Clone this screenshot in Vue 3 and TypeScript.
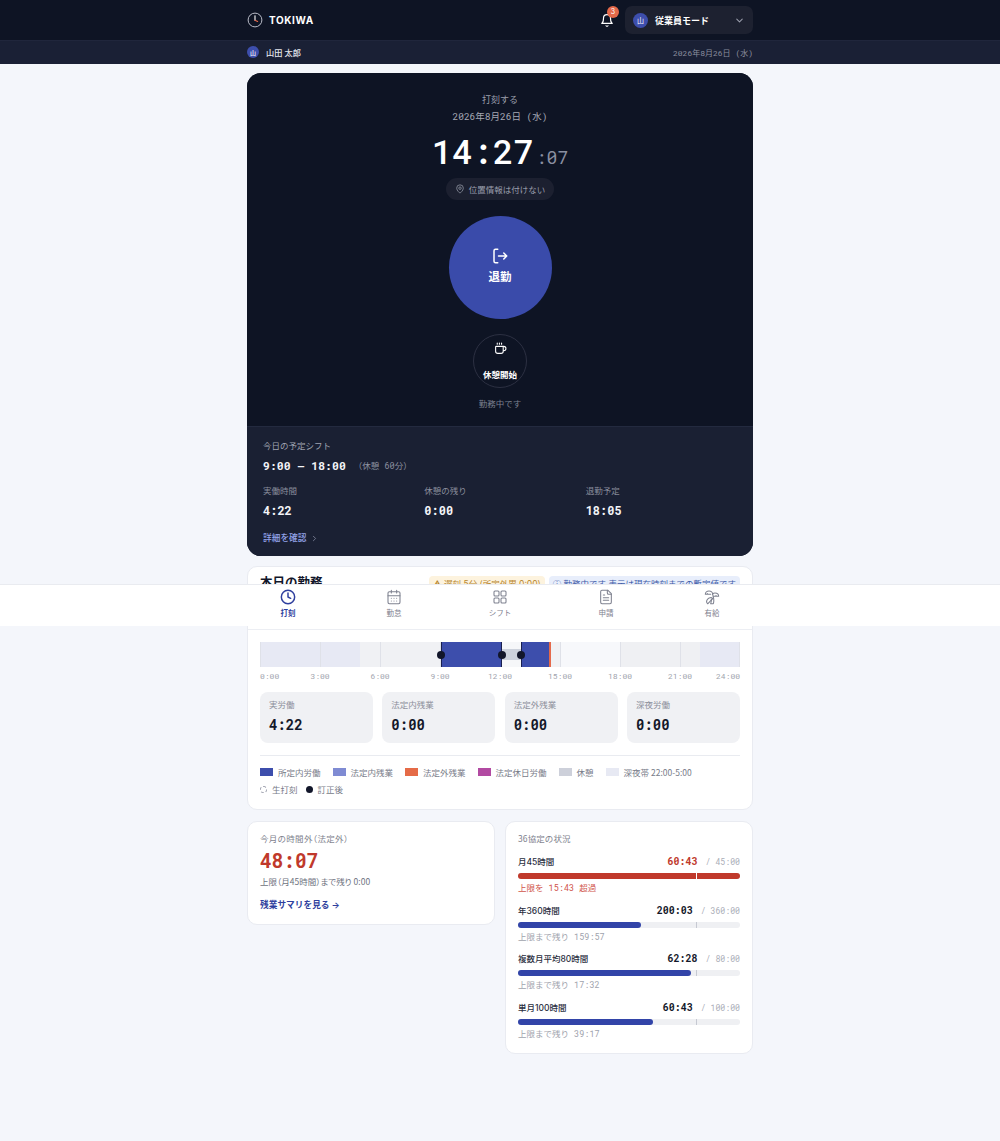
<script setup lang="ts">
const stats = [
  { label: '実労働', value: '4:22' },
  { label: '法定内残業', value: '0:00' },
  { label: '法定外残業', value: '0:00' },
  { label: '深夜労働', value: '0:00' },
]
const axis = [
  { t: '0:00', x: 0, a: 'start' }, { t: '3:00', x: 12.5, a: 'mid' }, { t: '6:00', x: 25, a: 'mid' },
  { t: '9:00', x: 37.5, a: 'mid' }, { t: '12:00', x: 50, a: 'mid' }, { t: '15:00', x: 62.5, a: 'mid' },
  { t: '18:00', x: 75, a: 'mid' }, { t: '21:00', x: 87.5, a: 'mid' }, { t: '24:00', x: 100, a: 'end' },
]
const gridlines = [0, 12.5, 25, 37.5, 50, 62.5, 75, 87.5, 99.8]
const bands = [
  { l: 0, w: 20.83, c: '#e7e9f4' }, { l: 20.83, w: 41.67, c: '#f0f1f4' }, { l: 62.5, w: 12.5, c: '#f7f8fb' },
  { l: 75, w: 16.67, c: '#eff0f3' }, { l: 91.67, w: 8.33, c: '#e7e9f4' },
]
const legend = [
  { c: '#3d4eac', t: '所定内労働' }, { c: '#7f8bd3', t: '法定内残業' }, { c: '#e56b47', t: '法定外残業' },
  { c: '#b24aa2', t: '法定休日労働' }, { c: '#cdd0da', t: '休憩' }, { c: '#e7e9f3', t: '深夜帯 22:00-5:00' },
]
const agreements = [
  { name: '月45時間', used: '60:43', max: '45:00', pct: 100, note: '上限を 15:43 超過', over: true, tick: 80 },
  { name: '年360時間', used: '200:03', max: '360:00', pct: 55.6, note: '上限まで残り 159:57', over: false, tick: 80 },
  { name: '複数月平均80時間', used: '62:28', max: '80:00', pct: 78.1, note: '上限まで残り 17:32', over: false, tick: 80 },
  { name: '単月100時間', used: '60:43', max: '100:00', pct: 60.7, note: '上限まで残り 39:17', over: false, tick: 80 },
]
</script>

<template>
  <div class="page">
    <header class="top">
      <div class="wrap top-in">
        <div class="brand">
          <svg width="16" height="16" viewBox="0 0 16 16" fill="none"><circle cx="8" cy="8" r="6.9" stroke="#b9bcc8" stroke-width="1"/><path d="M8 3.8v4.4" stroke="#fff" stroke-width="1.1" stroke-linecap="round"/><path d="M8 8.2l2.6 1.2" stroke="#e5694a" stroke-width="1.1" stroke-linecap="round"/></svg>
          <span>TOKIWA</span>
        </div>
        <div class="top-right">
          <div class="bell">
            <svg width="14" height="15" viewBox="0 0 24 24" fill="none" stroke="#fff" stroke-width="2" stroke-linecap="round" stroke-linejoin="round"><path d="M18 8a6 6 0 0 0-12 0c0 7-3 9-3 9h18s-3-2-3-9"/><path d="M13.7 21a2 2 0 0 1-3.4 0"/></svg>
            <span class="badge">3</span>
          </div>
          <div class="mode">
            <span class="ava big">山</span>
            <span class="mode-t">従業員モード</span>
            <svg class="chev" width="11" height="11" viewBox="0 0 24 24" fill="none" stroke="#9a9eac" stroke-width="2.2" stroke-linecap="round" stroke-linejoin="round"><path d="M6 9l6 6 6-6"/></svg>
          </div>
        </div>
      </div>
    </header>
    <div class="sub">
      <div class="wrap sub-in">
        <div class="who"><span class="ava">山</span><span>山田 太郎</span></div>
        <span class="sub-date">2026年8月26日 (水)</span>
      </div>
    </div>

    <main class="wrap main">
      <section class="punch">
        <div class="punch-top">
          <div class="p-label">打刻する</div>
          <div class="p-date">2026年8月26日 (水)</div>
          <div class="clock"><span class="hm">14:27</span><span class="sec">:07</span></div>
          <div class="geo">
            <svg width="10" height="10" viewBox="0 0 24 24" fill="none" stroke="#8c909e" stroke-width="2"><path d="M20 10c0 6-8 12-8 12s-8-6-8-12a8 8 0 0 1 16 0z"/><circle cx="12" cy="10" r="3"/></svg>
            <span>位置情報は付けない</span>
          </div>
          <button class="out">
            <svg width="18" height="18" viewBox="0 0 24 24" fill="none" stroke="#fff" stroke-width="2" stroke-linecap="round" stroke-linejoin="round"><path d="M9 3H6a2 2 0 0 0-2 2v14a2 2 0 0 0 2 2h3"/><path d="M10 12h11M17 8l4 4-4 4"/></svg>
            <span>退勤</span>
          </button>
          <button class="brk">
            <svg width="13" height="13" viewBox="0 0 24 24" fill="none" stroke="#fff" stroke-width="2" stroke-linecap="round" stroke-linejoin="round"><path d="M10 2v2M14 2v2M6 2v2"/><path d="M16 8a1 1 0 0 1 1 1v8a4 4 0 0 1-4 4H7a4 4 0 0 1-4-4V9a1 1 0 0 1 1-1h14a4 4 0 1 1 0 8h-1"/></svg>
            <span>休憩開始</span>
          </button>
          <div class="state">勤務中です</div>
        </div>
        <div class="punch-bot">
          <div class="sh-l">今日の予定シフト</div>
          <div class="sh-v"><span class="mono-b">9:00 – 18:00</span><span class="sh-n">（休憩 60分）</span></div>
          <div class="tri">
            <div><div class="tri-l">実働時間</div><div class="tri-v">4:22</div></div>
            <div><div class="tri-l">休憩の残り</div><div class="tri-v">0:00</div></div>
            <div><div class="tri-l">退勤予定</div><div class="tri-v">18:05</div></div>
          </div>
          <div class="more">詳細を確認<svg width="9" height="9" viewBox="0 0 24 24" fill="none" stroke="#8a8fa5" stroke-width="2" stroke-linecap="round" stroke-linejoin="round"><path d="M9 6l6 6-6 6"/></svg></div>
        </div>
      </section>

      <section class="card today">
        <div class="today-h">
          <h2>本日の勤務</h2>
          <div class="flags">
            <span class="flag warn">⚠ 遅刻 5分 (所定外累 0:00)</span>
            <span class="flag info">ⓘ 勤務中です 表示は現在時刻までの暫定値です</span>
          </div>
        </div>
        <div class="tl">
          <span v-for="b in bands" :key="b.l" class="band" :style="{ left: b.l + '%', width: b.w + '%', background: b.c }"></span>
          <span v-for="g in gridlines" :key="g" class="gl" :style="{ left: g + '%' }"></span>
          <span class="seg work" style="left:37.75%;width:12.65%"></span>
          <span class="seg gapbg" style="left:50.4%;width:4.05%"></span>
          <span class="seg rest" style="left:50.4%;width:4.05%"></span>
          <span class="seg work" style="left:54.45%;width:5.9%"></span>
          <span class="seg lateline" style="left:60.3%"></span>
          <span class="dot" style="left:37.75%"></span>
          <span class="dot" style="left:50.4%"></span>
          <span class="dot" style="left:54.45%"></span>
        </div>
        <div class="axis">
          <span v-for="a in axis" :key="a.t" :class="['ax', a.a]" :style="{ left: a.x + '%' }">{{ a.t }}</span>
        </div>
        <div class="stats">
          <div v-for="s in stats" :key="s.label" class="stat">
            <div class="stat-l">{{ s.label }}</div>
            <div class="stat-v">{{ s.value }}</div>
          </div>
        </div>
        <div class="legend">
          <div class="leg-row">
            <span v-for="l in legend" :key="l.t" class="leg"><i :style="{ background: l.c }"></i>{{ l.t }}</span>
          </div>
          <div class="leg-row two">
            <span class="leg s"><b class="raw"></b>生打刻</span>
            <span class="leg s"><b class="fix"></b>訂正後</span>
          </div>
        </div>
      </section>

      <div class="pair">
        <section class="card ot">
          <div class="c-t">今月の時間外（法定外）</div>
          <div class="ot-v">48:07</div>
          <div class="ot-n">上限（月45時間）まで残り 0:00</div>
          <div class="ot-l">残業サマリを見る →</div>
        </section>
        <section class="card agr">
          <div class="c-t">36協定の状況</div>
          <div v-for="a in agreements" :key="a.name" class="ag">
            <div class="ag-h">
              <span class="ag-n">{{ a.name }}</span>
              <span class="ag-r"><span :class="['ag-u', { red: a.over }]">{{ a.used }}</span><span class="ag-m">/ {{ a.max }}</span></span>
            </div>
            <div class="track">
              <div :class="['fill', { over: a.over }]" :style="{ width: a.pct + '%' }"></div>
              <span :class="['tick', { light: a.over }]" :style="{ left: a.tick + '%' }"></span>
            </div>
            <div :class="['ag-note', { red2: a.over }]">{{ a.note }}</div>
          </div>
        </section>
      </div>
    </main>

    <nav class="nav">
      <div class="nav-in">
        <div class="ni on">
          <svg width="16" height="16" viewBox="0 0 24 24" fill="none" stroke="currentColor" stroke-width="2.2" stroke-linecap="round" stroke-linejoin="round"><circle cx="12" cy="12" r="10"/><path d="M12 6v6l4 2"/></svg>
          <span>打刻</span>
        </div>
        <div class="ni">
          <svg width="16" height="16" viewBox="0 0 24 24" fill="none" stroke="currentColor" stroke-width="1.6" stroke-linecap="round" stroke-linejoin="round"><rect x="3" y="4" width="18" height="18" rx="2"/><path d="M8 2v4M16 2v4M3 10h18M8 14h.01M12 14h.01M16 14h.01M8 18h.01M12 18h.01M16 18h.01"/></svg>
          <span>勤怠</span>
        </div>
        <div class="ni">
          <svg width="16" height="16" viewBox="0 0 24 24" fill="none" stroke="currentColor" stroke-width="1.6" stroke-linecap="round" stroke-linejoin="round"><rect x="3" y="3" width="7.5" height="7.5" rx="1.5"/><rect x="13.5" y="3" width="7.5" height="7.5" rx="1.5"/><rect x="3" y="13.5" width="7.5" height="7.5" rx="1.5"/><rect x="13.5" y="13.5" width="7.5" height="7.5" rx="1.5"/></svg>
          <span>シフト</span>
        </div>
        <div class="ni">
          <svg width="16" height="16" viewBox="0 0 24 24" fill="none" stroke="currentColor" stroke-width="1.6" stroke-linecap="round" stroke-linejoin="round"><path d="M15 2H6a2 2 0 0 0-2 2v16a2 2 0 0 0 2 2h12a2 2 0 0 0 2-2V7z"/><path d="M14 2v4a2 2 0 0 0 2 2h4M10 9H8M16 13H8M16 17H8"/></svg>
          <span>申請</span>
        </div>
        <div class="ni">
          <svg width="16" height="16" viewBox="0 0 24 24" fill="none" stroke="currentColor" stroke-width="1.6" stroke-linecap="round" stroke-linejoin="round"><path d="M13 8c0-2.76-2.46-5-5.5-5S2 5.24 2 8h2l1-1 1 1h4"/><path d="M13 7.14A5.82 5.82 0 0 1 16.5 6c3.04 0 5.5 2.24 5.5 5h-3l-1-1-1 1h-3"/><path d="M5.89 14.71c-2.15 2.15-2.3 5.47-.35 7.43l4.24-4.25.7-.7.71-.71 2.12-2.12c-1.95-1.96-5.27-1.8-7.42.35"/><path d="M11 15.5c.5 2.5-.17 4.5-1 6.5h4c2-5.5-.5-12-1-14"/></svg>
          <span>有給</span>
        </div>
      </div>
    </nav>
  </div>
</template>

<style>
html, body { margin: 0; background: #f4f6fb; }
</style>

<style scoped>
* { box-sizing: border-box; }
.page {
  position: relative;
  height: 1141px;
  overflow: hidden;
  background: #f4f6fb;
  font-family: Inter, "Noto Sans CJK JP", sans-serif;
  color: #12162a;
}
.wrap { width: 506px; margin: 0 auto; }
.top { height: 40px; background: #0e1424; }
.top-in { display: flex; justify-content: space-between; align-items: center; height: 40px; }
.brand { display: flex; align-items: center; gap: 6px; color: #fff; font-size: 10px; font-weight: 700; letter-spacing: 0.6px; }
.top-right { display: flex; align-items: center; gap: 11px; }
.bell { position: relative; width: 14px; height: 15px; display: flex; }
.badge { position: absolute; left: 7px; top: -7px; width: 12px; height: 12px; border-radius: 50%; background: #e5694a; color: #fff; font-size: 7px; display: flex; align-items: center; justify-content: center; }
.mode { width: 128px; height: 28px; background: #1d2130; border-radius: 7px; display: flex; align-items: center; padding: 0 8px; gap: 7px; }
.mode-t { color: #fff; font-size: 9px; font-weight: 700; flex: 1; }
.ava { width: 12px; height: 12px; border-radius: 50%; background: #3d4eac; color: #fff; font-size: 6px; display: inline-flex; align-items: center; justify-content: center; }
.ava.big { width: 15px; height: 15px; font-size: 7px; }
.sub { height: 24px; background: #1a2035; border-top: 1px solid #20263c; }
.sub-in { display: flex; justify-content: space-between; align-items: center; height: 22px; }
.who { display: flex; align-items: center; gap: 7px; color: #e4e6ee; font-size: 8.2px; font-weight: 500; }
.sub-date { font-family: "Roboto Mono", "Noto Sans CJK JP", monospace; font-size: 8px; color: #8b8f9f; }
.main { padding-top: 9px; }
.punch { border-radius: 14px; overflow: hidden; background: #0e1424; height: 483px; display: flex; flex-direction: column; }
.punch-top { height: 354px; flex: none; display: flex; flex-direction: column; align-items: center; padding-top: 20px; border-bottom: 1px solid #232a3f; background: #0e1424; }
.p-label { font-size: 9px; line-height: 13px; color: #9a9eab; }
.p-date { font-family: "Roboto Mono", "Noto Sans CJK JP", monospace; font-size: 9.5px; line-height: 14px; color: #a5a8b4; margin-top: 4px; }
.clock { font-family: "Roboto Mono", monospace; color: #fff; margin-top: 9px; height: 36px; display: flex; align-items: baseline; }
.hm { font-size: 34px; line-height: 36px; font-weight: 500; }
.sec { font-size: 18px; color: #8a8fa0; margin-left: 2px; }
.geo { margin-top: 9px; height: 22px; padding: 0 9px; border-radius: 11px; background: #1c2030; display: flex; align-items: center; gap: 4px; color: #9a9eab; font-size: 8.5px; }
.out { margin-top: 16px; width: 103px; height: 103px; border: 0; border-radius: 50%; background: #3a4baa; color: #fff; display: flex; flex-direction: column; align-items: center; justify-content: center; gap: 3px; font-family: inherit; font-size: 11.5px; font-weight: 700; padding: 0 0 4px; }
.brk { margin-top: 15px; width: 54px; height: 54px; border: 1px solid #2c3042; border-radius: 50%; background: transparent; color: #fff; display: flex; flex-direction: column; align-items: center; justify-content: center; gap: 14px; font-family: inherit; font-size: 8.5px; font-weight: 700; padding: 0; line-height: 12px; }
.state { margin-top: 9px; font-size: 8.5px; color: #7d8190; }
.punch-bot { flex: 1; background: #1a2033; padding: 13px 16px; }
.sh-l { font-size: 8.5px; line-height: 12px; color: #a0a4b2; }
.sh-v { margin-top: 6px; display: flex; align-items: center; gap: 8px; line-height: 16px; }
.mono-b { font-family: "Roboto Mono", monospace; font-size: 11.5px; font-weight: 700; color: #f3f4f8; }
.sh-n { font-family: "Roboto Mono", "Noto Sans CJK JP", monospace; font-size: 8.5px; color: #8d91a0; }
.tri { margin-top: 11px; display: grid; grid-template-columns: repeat(3, 1fr); width: 484px; }
.tri-l { font-size: 8.5px; line-height: 12px; color: #8a8e9d; }
.tri-v { font-family: "Roboto Mono", monospace; font-size: 12px; font-weight: 700; color: #f3f4f8; margin-top: 5px; line-height: 16px; }
.more { margin-top: 14px; display: flex; align-items: center; gap: 4px; color: #94a4ea; font-size: 8.7px; font-weight: 500; line-height: 12px; }
.card { background: #fff; border: 1px solid #e9ebf1; border-radius: 10px; }
.today { margin-top: 10px; height: 244px; padding: 0 12px; }
.today-h { height: 63px; margin: 0 -12px; padding: 6px 12px 0; border-bottom: 1px solid #eceef3; display: flex; justify-content: space-between; align-items: flex-start; }
.today-h h2 { margin: 0; font-size: 12.5px; font-weight: 700; line-height: 20px; }
.flags { display: flex; gap: 4px; margin-top: 3px; }
.flag { font-size: 8.5px; height: 16px; line-height: 16px; padding: 0 4px; border-radius: 4px; white-space: nowrap; }
.warn { background: #fdf3de; color: #b8862d; }
.info { background: #e8eefb; color: #3d5aa8; }
.tl { position: relative; height: 25px; margin-top: 12px; }
.band, .gl, .seg, .dot { position: absolute; }
.band { top: 0; bottom: 0; }
.gl { top: 0; bottom: 0; width: 1px; background: #dfe1e8; }
.seg { top: 0; bottom: 0; }
.work { background: #3d4eac; border-left: 1px solid #1a2050; border-right: 1px solid #1a2050; }
.gapbg { background: #f6f7f9; }
.rest { top: 7px; bottom: 7px; background: #cdd2dc; }
.lateline { width: 2px; background: #e5694a; }
.dot { top: 8.5px; width: 8px; height: 8px; margin-left: -4px; border-radius: 50%; background: #12162a; }
.axis { position: relative; height: 12px; margin-top: 3px; }
.ax { position: absolute; top: 0; font-family: "Roboto Mono", monospace; font-size: 8px; line-height: 12px; color: #a1a4ae; white-space: nowrap; }
.ax.mid { transform: translateX(-50%); }
.ax.end { transform: translateX(-100%); }
.stats { margin-top: 10px; display: grid; grid-template-columns: repeat(4, 113px); justify-content: space-between; padding-bottom: 12px; border-bottom: 1px solid #e9ebf0; }
.stat { height: 51px; border-radius: 8px; background: #f0f1f4; padding: 7px 9px; }
.stat-l { font-size: 8.5px; line-height: 12px; color: #8b8e9a; }
.stat-v { font-family: "Roboto Mono", monospace; font-size: 14px; font-weight: 700; line-height: 18px; margin-top: 5px; color: #14182a; }
.legend { padding-top: 9px; font-family: "Noto Sans CJK JP", sans-serif; }
.leg-row { display: flex; gap: 12px; height: 14px; align-items: center; }
.leg-row.two { margin-top: 3px; gap: 8px; }
.leg { display: inline-flex; align-items: center; gap: 5px; font-size: 8.5px; color: #777b88; white-space: nowrap; }
.leg i { width: 13px; height: 8px; display: block; }
.leg b { display: block; width: 7px; height: 7px; border-radius: 50%; }
.raw { border: 1px dashed #9a9dab; }
.fix { background: #12162a; }
.pair { margin-top: 11px; display: grid; grid-template-columns: 1fr 1fr; gap: 10px; align-items: start; }
.ot { height: 104px; padding: 10px 12px; }
.c-t { font-family: "Noto Sans CJK JP", sans-serif; font-size: 8.5px; line-height: 13px; color: #7e818d; letter-spacing: 0.1px; }
.ot .c-t { font-feature-settings: "palt"; letter-spacing: 0.35px; }
.ot-v { font-family: "Roboto Mono", monospace; font-size: 19.5px; font-weight: 700; line-height: 24px; color: #c0392b; margin-top: 4px; }
.ot-n { font-family: "Noto Sans CJK JP", sans-serif; font-feature-settings: "palt"; font-size: 8.5px; line-height: 12px; color: #6e7280; margin-top: 2px; }
.ot-l { font-size: 8.7px; font-weight: 700; line-height: 12px; color: #2f3f9e; margin-top: 12px; }
.agr { height: 233px; padding: 10px 12px; }
.ag { margin-top: 10px; }
.ag + .ag { margin-top: 9.5px; }
.ag-h { display: flex; justify-content: space-between; align-items: center; line-height: 14px; height: 14px; }
.ag-r { display: inline-flex; align-items: baseline; gap: 8px; }
.ag-n { font-size: 8.5px; font-weight: 500; color: #2a2e3e; }
.ag-u { font-family: "Roboto Mono", monospace; font-size: 10px; font-weight: 700; color: #14182a; }
.ag-u.red { color: #c0392b; }
.ag-m { font-family: "Roboto Mono", monospace; font-size: 8.2px; color: #aaadb7; }
.track { position: relative; height: 6px; margin-top: 4px; background: #eff0f3; border-radius: 3px; }
.fill { height: 6px; background: #3244a8; border-radius: 3px; }
.fill.over { background: #c0392b; }
.tick { position: absolute; top: 0; bottom: 0; width: 1px; background: #c6c9d2; }
.tick.light { background: #fff; }
.ag-note { font-family: "Roboto Mono", "Noto Sans CJK JP", monospace; font-size: 8.5px; line-height: 12px; color: #a0a3ad; margin-top: 3px; }
.red2 { color: #d0544a; }
.nav { position: absolute; left: 0; right: 0; top: 584px; height: 42px; background: #fff; border-top: 1px solid #e9ebf0; }
.nav-in { width: 530px; margin: 0 auto; display: grid; grid-template-columns: repeat(5, 1fr); height: 100%; }
.ni { display: flex; flex-direction: column; align-items: center; padding-top: 4px; gap: 3px; color: #7f8290; font-size: 7.5px; line-height: 11px; }
.ni.on { color: #2f3f9e; font-weight: 700; }
</style>
